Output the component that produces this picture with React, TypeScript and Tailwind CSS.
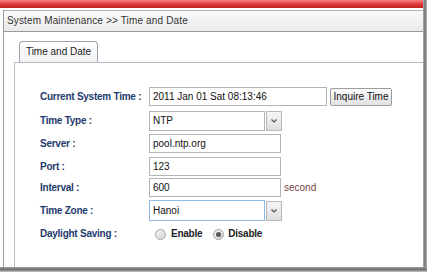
import React from "react";

const Field = ({
  w,
  h = 19,
  value,
  focus = false,
}: {
  w: number;
  h?: number;
  value: string;
  focus?: boolean;
}) => (
  <div
    className={`flex items-center pl-[3px] bg-white text-[#111] border ${
      focus ? "border-[#8fbbe9]" : "border-[#b4b4b4]"
    }`}
    style={{ width: w, height: h }}
  >
    {value}
  </div>
);

const DropArrow = ({ h }: { h: number }) => (
  <div
    className="ml-px w-[16px] flex items-center justify-center border border-[#b9b9b9] bg-gradient-to-b from-[#f6f6f6] to-[#dedede]"
    style={{ height: h }}
  >
    <svg width="6" height="4" viewBox="0 0 6 4">
      <path d="M0.5 0.5 L3 3 L5.5 0.5" fill="none" stroke="#555" strokeWidth="1.2" />
    </svg>
  </div>
);

const Radio = ({ checked }: { checked?: boolean }) => (
  <div className="w-[11px] h-[11px] rounded-full border border-[#a2a2a2] bg-gradient-to-br from-[#f4f4f4] to-[#d6d6d6] flex items-center justify-center">
    {checked && <div className="w-[5px] h-[5px] rounded-full bg-[#5a5a5a]" />}
  </div>
);

const Label = ({ children }: { children: React.ReactNode }) => (
  <div className="w-[109px] shrink-0 font-bold tracking-[-0.25px] text-[#1e3b6d]">
    {children}
  </div>
);

export default function App() {
  return (
    <div className="w-[427px] h-[272px] bg-white flex flex-col overflow-hidden font-['Liberation_Sans',Arial,sans-serif] text-[10px] leading-none">
      <div className="flex-1 flex min-h-0">
        <div className="flex-1 flex flex-col min-w-0">
          {/* red strip */}
          <div className="h-[8px] bg-gradient-to-b from-[#f38080] via-[#e03838] to-[#c22222]" />
          <div className="h-[2px]" />

          <div className="flex-1 flex flex-col ml-[3px] border-l border-[#9c9c9c]">
            {/* title bar */}
            <div className="h-[22px] shrink-0 flex items-center pl-[3px] border-t border-b border-t-[#b3b3b3] border-b-[#9a9a9a] bg-gradient-to-b from-[#f9f9f9] to-[#ebebeb] text-[#333] tracking-[0.15px]">
              System Maintenance &gt;&gt; Time and Date
            </div>

            <div className="flex-1 flex flex-col pt-[9px] pl-[10px]">
              {/* tab */}
              <div className="ml-[5px] w-[79px] h-[21px] flex items-center justify-center border border-b-0 border-[#a0a0ac] rounded-t-[4px] bg-gradient-to-b from-white to-[#f2f2f2] text-[#222]">
                Time and Date
              </div>

              {/* panel */}
              <div className="flex-1 border-l border-t border-[#b9b9c8] pt-[24px] pl-[25px]">
                <div className="flex items-center h-[19px]">
                  <Label>Current System Time :</Label>
                  <Field w={178} value="2011 Jan 01 Sat 08:13:46" />
                  <div className="ml-[3px] w-[62px] h-[18px] flex items-center justify-center border border-[#9c9c9c] rounded-[2px] bg-gradient-to-b from-[#fbfbfb] to-[#e2e2e2] text-[#111]">
                    Inquire Time
                  </div>
                </div>

                <div className="flex items-center h-[20px] mt-[5px]">
                  <Label>Time Type :</Label>
                  <Field w={116} h={20} value="NTP" />
                  <DropArrow h={20} />
                </div>

                <div className="flex items-center h-[19px] mt-[3px]">
                  <Label>Server :</Label>
                  <Field w={132} value="pool.ntp.org" />
                </div>

                <div className="flex items-center h-[19px] mt-[4px]">
                  <Label>Port :</Label>
                  <Field w={132} value="123" />
                </div>

                <div className="flex items-center h-[19px] mt-[2px]">
                  <Label>Interval :</Label>
                  <Field w={132} value="600" />
                  <span className="ml-[3px] text-[#7d3f3f]">second</span>
                </div>

                <div className="flex items-center h-[21px] mt-[3px]">
                  <Label>Time Zone :</Label>
                  <Field w={116} h={21} value="Hanoi" focus />
                  <DropArrow h={20} />
                </div>

                <div className="flex items-center h-[14px] mt-[6px]">
                  <Label>Daylight Saving :</Label>
                  <div className="ml-[6px] flex items-center gap-[5px]">
                    <Radio />
                    <span className="font-bold tracking-[-0.25px] text-[#222]">Enable</span>
                  </div>
                  <div className="ml-[11px] flex items-center gap-[4px]">
                    <Radio checked />
                    <span className="font-bold tracking-[-0.25px] text-[#222]">Disable</span>
                  </div>
                </div>
              </div>
            </div>
          </div>
        </div>
        {/* right shadow edge */}
        <div className="w-[4px] bg-gradient-to-r from-[#b0b0b0] via-[#6f6f6f] to-[#bdbdbd]" />
      </div>
      {/* bottom shadow edge */}
      <div className="h-[5px] bg-gradient-to-b from-[#a0a0a0] via-[#707070] to-[#c4c4c4]" />
    </div>
  );
}
